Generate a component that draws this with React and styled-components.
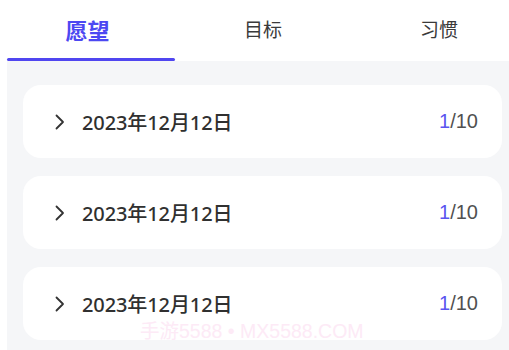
import React from "react";
import styled, { createGlobalStyle } from "styled-components";

const Global = createGlobalStyle`
  html, body { margin: 0; padding: 0; background: #ffffff; overflow: hidden; }
  body { font-family: "Noto Sans", "Noto Sans CJK SC", sans-serif; }
`;

const Page = styled.div`
  width: 509px;
  height: 350px;
  position: relative;
  overflow: hidden;
  background: #ffffff;
`;

const TabBar = styled.div`
  display: grid;
  grid-template-columns: 175px 176px 176px;
  height: 61px;
  background: #ffffff;
`;

const Tab = styled.div`
  display: flex;
  flex-direction: column;
  align-items: center;
  justify-content: space-between;
  padding-top: 14px;
  font-size: ${(p) => (p.$active ? "22px" : "19px")};
  font-weight: ${(p) => (p.$active ? 700 : 400)};
  color: ${(p) => (p.$active ? "#4c48f2" : "#3a3a3a")};
  line-height: 32px;
`;

const Underline = styled.div`
  align-self: stretch;
  margin-left: 7px;
  height: 3px;
  border-radius: 2px;
  background: ${(p) => (p.$show ? "#5046f0" : "transparent")};
`;

const Content = styled.div`
  margin-left: 7px;
  background: #f5f6f8;
  height: 289px;
  padding: 24px 7px 0 16px;
  display: flex;
  flex-direction: column;
  gap: 18px;
  box-sizing: border-box;
`;

const Card = styled.div`
  height: 73px;
  background: #ffffff;
  border-radius: 18px;
  display: flex;
  align-items: center;
  padding: 0 24px 0 31px;
  flex-shrink: 0;
`;

const Chevron = styled.svg`
  width: 11px;
  height: 18px;
  flex-shrink: 0;
  margin-right: 17px;
`;

const DateText = styled.div`
  flex: 1;
  font-size: 20px;
  font-weight: 500;
  color: #303030;
  letter-spacing: -0.1px;
`;

const Count = styled.div`
  font-size: 20px;
  color: #505050;
  font-family: "Liberation Sans", "Noto Sans", sans-serif;
`;

const Done = styled.span`
  color: #5a55f0;
`;

const Watermark = styled.div`
  position: absolute;
  left: 140px;
  top: 315px;
  font-size: 19.5px;
  color: #fdeaf6;
  font-family: "Liberation Sans", "Noto Sans CJK SC", sans-serif;
  pointer-events: none;
  white-space: nowrap;
`;

const tabs = ["愿望", "目标", "习惯"];
const items = [1, 2, 3];

export default function App() {
  return (
    <Page>
      <Global />
      <TabBar>
        {tabs.map((t, i) => (
          <Tab key={t} $active={i === 0}>
            <span>{t}</span>
            <Underline $show={i === 0} />
          </Tab>
        ))}
      </TabBar>
      <Content>
        {items.map((k) => (
          <Card key={k}>
            <Chevron viewBox="0 0 11 18">
              <polyline
                points="2.5,2.5 9,9 2.5,15.5"
                fill="none"
                stroke="#333"
                strokeWidth="1.8"
                strokeLinecap="round"
                strokeLinejoin="round"
              />
            </Chevron>
            <DateText>2023年12月12日</DateText>
            <Count>
              <Done>1</Done>/10
            </Count>
          </Card>
        ))}
      </Content>
      <Watermark>手游5588 • MX5588.COM</Watermark>
    </Page>
  );
}
